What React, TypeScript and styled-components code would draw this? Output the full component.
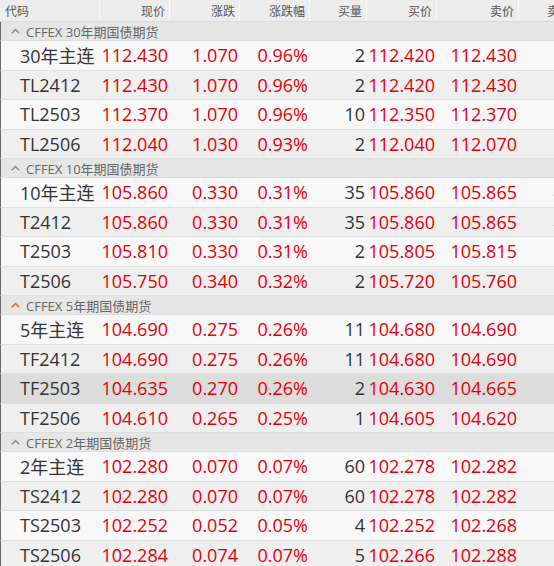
import React from "react";
import styled, { createGlobalStyle } from "styled-components";

const GlobalStyle = createGlobalStyle`
  html, body {
    margin: 0;
    padding: 0;
    overflow: hidden;
    background: #f2f2f2;
  }
  body {
    font-family: "Open Sans", "Noto Sans CJK SC", sans-serif;
  }
`;

const COLS = "100px 70px 70px 70px 57px 70px 82px 57px";

const Table = styled.div`
  display: flex;
  flex-direction: column;
  width: 576px;
`;

const HeaderRow = styled.div`
  display: grid;
  grid-template-columns: ${COLS};
  height: 22px;
  box-sizing: border-box;
  background: #ededed;
  border-bottom: 1px solid #dcdcdc;
`;

const HeaderCell = styled.div<{ $left?: boolean }>`
  display: flex;
  align-items: center;
  justify-content: ${(p) => (p.$left ? "flex-start" : "flex-end")};
  padding: 0 4px 0 5px;
  font-size: 12px;
  color: #555;
  border-right: 1px solid #fafafa;
  white-space: nowrap;
  overflow: hidden;
`;

const GroupRow = styled.div`
  display: flex;
  align-items: center;
  gap: 6px;
  height: 19px;
  box-sizing: border-box;
  padding-left: 10px;
  background: #e6e6e6;
  border-left: 1px solid #6a6a6a;
  border-bottom: 1px solid #dedede;
  font-size: 13px;
  color: #666;
  white-space: nowrap;
`;

const DataRow = styled.div<{ $tone: "light" | "dark" | "sel" }>`
  display: grid;
  grid-template-columns: ${COLS};
  height: 29.5px;
  box-sizing: border-box;
  border-left: 1px solid #6a6a6a;
  border-bottom: 1px solid #e0e0e0;
  background: ${(p) =>
    p.$tone === "sel" ? "#dcdcdc" : p.$tone === "dark" ? "#efefef" : "#f8f8f8"};
`;

const Cell = styled.div<{ $kind: "name" | "red" | "vol" }>`
  display: flex;
  align-items: center;
  justify-content: ${(p) => (p.$kind === "name" ? "flex-start" : "flex-end")};
  padding: ${(p) => (p.$kind === "name" ? "0 0 0 19px" : "0 3px 0 0")};
  font-size: 18px;
  color: ${(p) => (p.$kind === "red" ? "#e0000b" : "#333")};
  white-space: nowrap;
`;

const Chevron = ({ color }: { color: string }) => (
  <svg width="9" height="6" viewBox="0 0 9 6">
    <polyline points="0.8,5.2 4.5,1.4 8.2,5.2" fill="none" stroke={color} strokeWidth="1.4" />
  </svg>
);

type Row = [string, string, string, string, string, string, string, string];

const groups: { title: string; chev: string; sel?: number; rows: Row[] }[] = [
  {
    title: "CFFEX 30年期国债期货",
    chev: "#8a8a8a",
    rows: [
      ["30年主连", "112.430", "1.070", "0.96%", "2", "112.420", "112.430", ""],
      ["TL2412", "112.430", "1.070", "0.96%", "2", "112.420", "112.430", ""],
      ["TL2503", "112.370", "1.070", "0.96%", "10", "112.350", "112.370", ""],
      ["TL2506", "112.040", "1.030", "0.93%", "2", "112.040", "112.070", ""],
    ],
  },
  {
    title: "CFFEX 10年期国债期货",
    chev: "#8a8a8a",
    rows: [
      ["10年主连", "105.860", "0.330", "0.31%", "35", "105.860", "105.865", "41"],
      ["T2412", "105.860", "0.330", "0.31%", "35", "105.860", "105.865", "41"],
      ["T2503", "105.810", "0.330", "0.31%", "2", "105.805", "105.815", ""],
      ["T2506", "105.750", "0.340", "0.32%", "2", "105.720", "105.760", ""],
    ],
  },
  {
    title: "CFFEX 5年期国债期货",
    chev: "#e0603c",
    sel: 2,
    rows: [
      ["5年主连", "104.690", "0.275", "0.26%", "11", "104.680", "104.690", ""],
      ["TF2412", "104.690", "0.275", "0.26%", "11", "104.680", "104.690", ""],
      ["TF2503", "104.635", "0.270", "0.26%", "2", "104.630", "104.665", ""],
      ["TF2506", "104.610", "0.265", "0.25%", "1", "104.605", "104.620", ""],
    ],
  },
  {
    title: "CFFEX 2年期国债期货",
    chev: "#8a8a8a",
    rows: [
      ["2年主连", "102.280", "0.070", "0.07%", "60", "102.278", "102.282", ""],
      ["TS2412", "102.280", "0.070", "0.07%", "60", "102.278", "102.282", ""],
      ["TS2503", "102.252", "0.052", "0.05%", "4", "102.252", "102.268", ""],
      ["TS2506", "102.284", "0.074", "0.07%", "5", "102.266", "102.288", ""],
    ],
  },
];

const headers = ["代码", "现价", "涨跌", "涨跌幅", "买量", "买价", "卖价", "卖量"];
const kinds: ("name" | "red" | "vol")[] = ["name", "red", "red", "red", "vol", "red", "red", "vol"];

export default function App() {
  return (
    <>
      <GlobalStyle />
      <Table>
        <HeaderRow>
          {headers.map((h, i) => (
            <HeaderCell key={h} $left={i === 0}>
              {h}
            </HeaderCell>
          ))}
        </HeaderRow>
        {groups.map((g) => (
          <React.Fragment key={g.title}>
            <GroupRow>
              <Chevron color={g.chev} />
              <span>{g.title}</span>
            </GroupRow>
            {g.rows.map((r, i) => (
              <DataRow key={r[0]} $tone={g.sel === i ? "sel" : i % 2 === 1 ? "dark" : "light"}>
                {r.map((v, j) => (
                  <Cell key={j} $kind={kinds[j]}>
                    {v}
                  </Cell>
                ))}
              </DataRow>
            ))}
          </React.Fragment>
        ))}
      </Table>
    </>
  );
}
